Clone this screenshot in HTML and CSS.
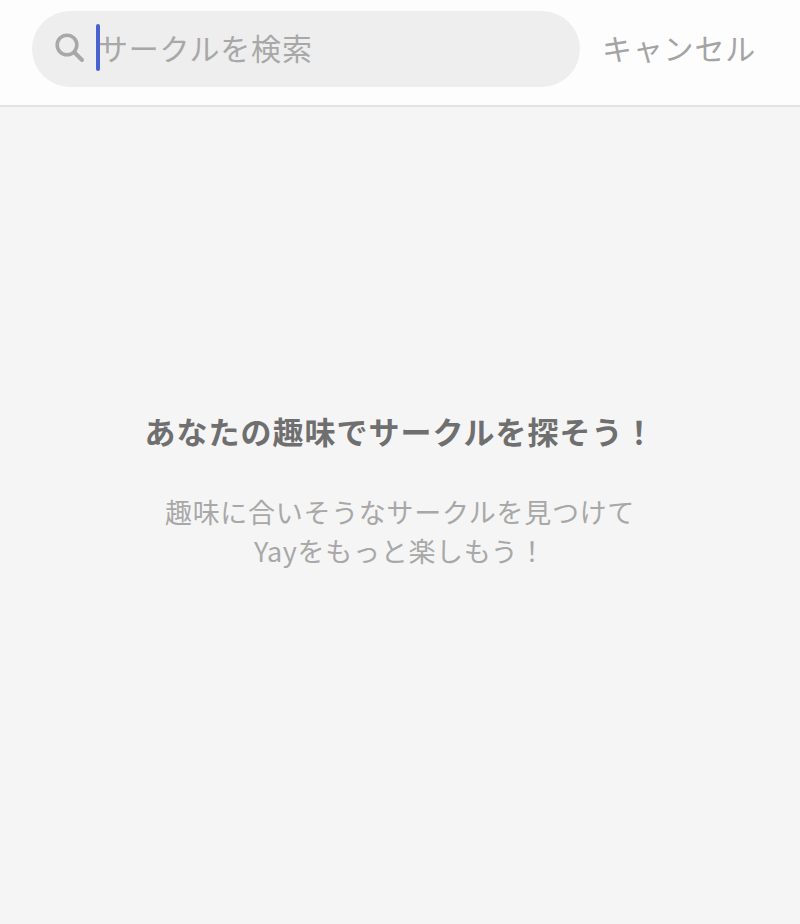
FILE: index.html
```html
<!DOCTYPE html>
<html lang="ja">

<head>
    <meta charset="UTF-8">
    <meta name="viewport" content="width=device-width, initial-scale=1.0">
    <title>サークルを検索</title>
    <link rel="stylesheet" href="styles.css">
</head>

<body>
    <header class="search_bar">
        <div class="search_box">
            <svg class="search_icon" viewBox="0 0 30 30" width="30" height="30">
                <circle cx="12" cy="12" r="9.8" fill="none" stroke="#a8a8a8" stroke-width="3.6" />
                <line x1="19.5" y1="19.5" x2="27" y2="27" stroke="#a8a8a8" stroke-width="4" stroke-linecap="round" />
            </svg>
            <span class="caret"></span>
            <span class="placeholder">サークルを検索</span>
        </div>
        <span class="cancel">キャンセル</span>
    </header>

    <main class="empty">
        <h1>あなたの趣味でサークルを探そう！</h1>
        <p>趣味に合いそうなサークルを見つけて<br>Yayをもっと楽しもう！</p>
    </main>
</body>

</html>
```

FILE: styles.css
```css
* {
    box-sizing: border-box;
}

html,
body {
    height: 100%;
}

body {
    margin: 0;
    display: flex;
    flex-direction: column;
    background-color: #f5f5f5;
    font-family: "Noto Sans CJK JP", "Noto Sans", sans-serif;
}

.search_bar {
    display: flex;
    align-items: center;
    height: 107px;
    padding: 5px 44px 12px 32px;
    background-color: #fdfdfd;
    border-bottom: 2px solid #e3e3e3;
}

.search_box {
    display: flex;
    align-items: center;
    width: 548px;
    height: 76px;
    padding-left: 23px;
    background-color: #eeeeee;
    border-radius: 38px;
}

.search_icon {
    flex-shrink: 0;
    margin-bottom: 2px;
}

.caret {
    flex-shrink: 0;
    width: 4px;
    height: 47px;
    margin-left: 11px;
    margin-bottom: 4px;
    background-color: #4a62cf;
    border-radius: 2px;
}

.placeholder {
    margin-left: -2px;
    margin-bottom: 4px;
    font-size: 30px;
    line-height: 44px;
    color: #a8a8a8;
    letter-spacing: 0.8px;
}

.cancel {
    margin-left: auto;
    margin-bottom: 4px;
    font-size: 30px;
    line-height: 44px;
    color: #a4a4a4;
    letter-spacing: 0.8px;
}

.empty {
    flex: 1;
    padding-top: 301px;
    text-align: center;
}

.empty h1 {
    margin: 0;
    font-size: 31px;
    line-height: 46px;
    font-weight: 700;
    color: #6f6f6f;
    letter-spacing: 1px;
}

.empty p {
    margin: 38px 0 0;
    font-size: 27px;
    line-height: 39px;
    color: #a8a8a8;
    letter-spacing: 0.7px;
}
```
